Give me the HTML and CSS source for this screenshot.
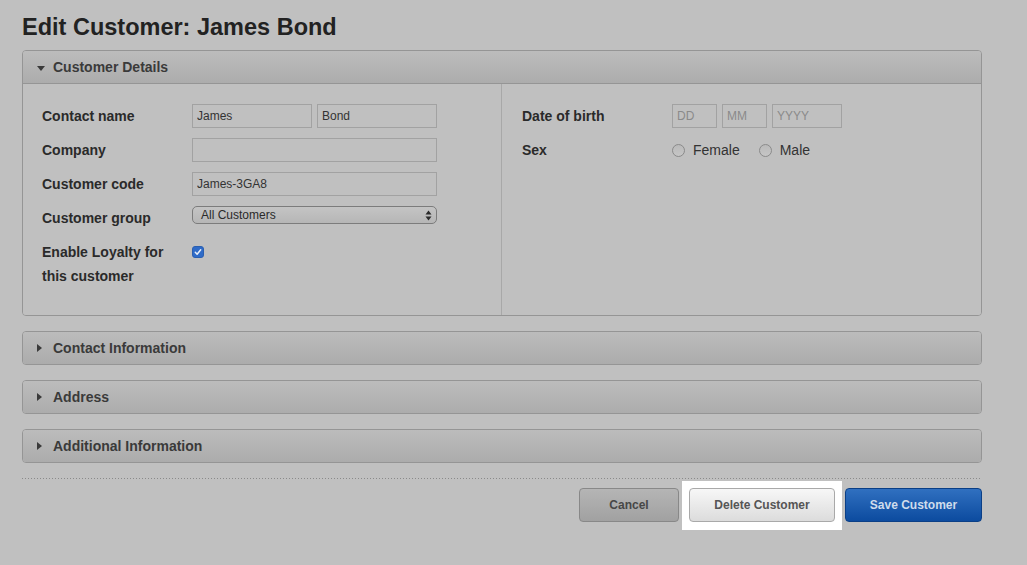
FILE: index.html
```html
<!DOCTYPE html>
<html lang="en">
<head>
<meta charset="utf-8">
<title>Edit Customer: James Bond</title>
<link rel="stylesheet" href="styles.css">
</head>
<body>
<div class="page">
  <h1 class="title">Edit Customer: James Bond</h1>

  <section class="panel">
    <div class="panel-head"><span class="tri tri-down"></span>Customer Details</div>
    <div class="panel-body">
      <div class="col col-left">
        <div class="row">
          <div class="label">Contact name</div>
          <div class="fields">
            <input class="input w120" type="text" value="James">
            <input class="input w120" type="text" value="Bond">
          </div>
        </div>
        <div class="row">
          <div class="label">Company</div>
          <div class="fields"><input class="input w245" type="text" value=""></div>
        </div>
        <div class="row">
          <div class="label">Customer code</div>
          <div class="fields"><input class="input w245" type="text" value="James-3GA8"></div>
        </div>
        <div class="row">
          <div class="label">Customer group</div>
          <div class="fields">
            <div class="select">
              <span class="select-text">All Customers</span>
              <svg class="select-arrows" width="7" height="11" viewBox="0 0 7 11"><path d="M3.5 0.5 L6.5 4.5 L0.5 4.5 Z M3.5 10.5 L6.5 6.5 L0.5 6.5 Z" fill="#2a2a2a"/></svg>
            </div>
          </div>
        </div>
        <div class="row row-tall">
          <div class="label label-2">Enable Loyalty for<br>this customer</div>
          <div class="fields fields-check">
            <span class="checkbox"><svg width="12" height="12" viewBox="0 0 12 12"><path d="M3.3 6.3 L5.1 8.2 L8.7 3.8" fill="none" stroke="#e8eef8" stroke-width="1.5" stroke-linecap="round" stroke-linejoin="round"/></svg></span>
          </div>
        </div>
      </div>
      <div class="col col-right">
        <div class="row">
          <div class="label">Date of birth</div>
          <div class="fields">
            <input class="input w45 ph" type="text" placeholder="DD">
            <input class="input w45 ph" type="text" placeholder="MM">
            <input class="input w70 ph" type="text" placeholder="YYYY">
          </div>
        </div>
        <div class="row">
          <div class="label">Sex</div>
          <div class="fields radios">
            <span class="radio-opt"><span class="radio"></span>Female</span>
            <span class="radio-opt"><span class="radio"></span>Male</span>
          </div>
        </div>
      </div>
    </div>
  </section>

  <section class="panel closed">
    <div class="panel-head"><span class="tri tri-right"></span>Contact Information</div>
  </section>
  <section class="panel closed">
    <div class="panel-head"><span class="tri tri-right"></span>Address</div>
  </section>
  <section class="panel closed">
    <div class="panel-head"><span class="tri tri-right"></span>Additional Information</div>
  </section>

  <div class="dots"></div>

  <div class="actions">
    <button class="btn btn-cancel" type="button">Cancel</button>
    <span class="spotlight"><button class="btn btn-delete" type="button">Delete Customer</button></span>
    <button class="btn btn-save" type="button">Save Customer</button>
  </div>
</div>
</body>
</html>
```
FILE: styles.css
```css
* { box-sizing: border-box; }

html, body {
  margin: 0;
  padding: 0;
  background: #c0c0c0;
}

body {
  font-family: "Liberation Sans", Arial, Helvetica, sans-serif;
  color: #2a2a2a;
  height: 565px;
  overflow: hidden;
}

.page {
  width: 982px;
  padding: 13px 0 0 22px;
}

.title {
  margin: 0 0 9px 0;
  font-size: 23.5px;
  line-height: 28px;
  font-weight: bold;
  color: #222;
}

/* Panels */
.panel {
  width: 960px;
  border: 1px solid #959595;
  border-radius: 4px;
  overflow: hidden;
}

.panel + .panel {
  margin-top: 15px;
}

.panel-head {
  display: flex;
  align-items: center;
  height: 33px;
  padding-left: 14px;
  background: linear-gradient(to bottom, #bcbcbc, #acacac);
  border-bottom: 1px solid #959595;
  font-size: 14px;
  font-weight: bold;
  color: #3a3a3a;
}

.panel.closed .panel-head {
  height: 32px;
  border-bottom: 0;
}

.tri {
  display: inline-block;
  width: 0;
  height: 0;
  margin-right: 8px;
}

.tri-down {
  border-left: 4px solid transparent;
  border-right: 4px solid transparent;
  border-top: 5px solid #3a3a3a;
  margin-top: 3px;
}

.tri-right {
  border-top: 4px solid transparent;
  border-bottom: 4px solid transparent;
  border-left: 5px solid #3a3a3a;
  margin-right: 11px;
}

.panel-body {
  display: flex;
  background: #c0c0c0;
}

.col {
  padding: 20px 0 27px 19px;
  display: flex;
  flex-direction: column;
  gap: 10px;
}

.col-left {
  width: 479px;
  border-right: 1px solid #a8a8a8;
}

.col-right {
  flex: 1;
  padding-left: 20px;
}

.row {
  display: flex;
  align-items: flex-start;
  min-height: 24px;
}

.label {
  width: 150px;
  flex: none;
  font-size: 14px;
  font-weight: bold;
  line-height: 24px;
  color: #2a2a2a;
}

.fields {
  display: flex;
  gap: 5px;
  align-items: flex-start;
}

.fields-check {
  padding-top: 6px;
}

.input {
  height: 24px;
  padding: 0 4px;
  margin: 0;
  border: 1px solid #a2a2a2;
  border-radius: 0;
  background: transparent;
  font-family: "Liberation Sans", Arial, Helvetica, sans-serif;
  font-size: 12px;
  color: #333;
  outline: none;
}

.input::placeholder {
  color: #8a8a8a;
}

.w45 { width: 45px; }
.w70 { width: 70px; }
.w120 { width: 120px; }
.w245 { width: 245px; }

.select {
  width: 245px;
  height: 18px;
  border: 1px solid #7c7c7c;
  border-radius: 5px;
  background: linear-gradient(to bottom, #c4c4c4, #b6b6b6);
  display: flex;
  align-items: center;
  justify-content: space-between;
  padding: 0 4px 0 8px;
}

.select-text {
  font-size: 12px;
  color: #2a2a2a;
  line-height: 16px;
}

.select-arrows {
  display: block;
}

.checkbox {
  display: block;
  width: 12px;
  height: 12px;
  border-radius: 3px;
  background: #2f6bc8;
  border: 1px solid #2a5fb0;
  position: relative;
}

.checkbox svg {
  position: absolute;
  left: -1px;
  top: -1px;
}

.radios {
  gap: 19px;
  height: 24px;
  align-items: center;
}

.radio-opt {
  display: flex;
  align-items: center;
  font-size: 14px;
  color: #333;
}

.radio {
  display: inline-block;
  width: 13px;
  height: 13px;
  border: 1px solid #8a8a8a;
  border-radius: 50%;
  background: linear-gradient(to bottom, #bababa, #c6c6c6);
  margin-right: 8px;
}

/* Divider */
.dots {
  width: 960px;
  height: 1px;
  margin-top: 15px;
  background-image: linear-gradient(to right, #8a8a8a 1px, transparent 1px);
  background-size: 3px 1px;
}

/* Actions */
.actions {
  width: 960px;
  margin-top: 9px;
  display: flex;
  justify-content: flex-end;
  align-items: flex-start;
  gap: 10px;
}

.btn {
  height: 34px;
  margin: 0;
  border-radius: 4px;
  font-family: "Liberation Sans", Arial, Helvetica, sans-serif;
  font-size: 12px;
  font-weight: bold;
  padding: 0;
  cursor: pointer;
}

.btn-cancel {
  width: 100px;
  border: 1px solid #888;
  background: linear-gradient(to bottom, #b5b5b5, #a1a1a1);
  color: #474747;
}

.spotlight {
  display: flex;
  background: #ffffff;
  padding: 7px 7px 8px 7px;
  margin: -7px -7px -8px -7px;
}

.btn-delete {
  width: 146px;
  border: 1px solid #a9a9a9;
  background: linear-gradient(to bottom, #f7f7f7, #dcdcdc);
  color: #555;
}

.btn-save {
  width: 137px;
  border: 1px solid #0b3f86;
  background: linear-gradient(to bottom, #3070c0, #0c4b9f);
  color: #cfdcec;
}
```
